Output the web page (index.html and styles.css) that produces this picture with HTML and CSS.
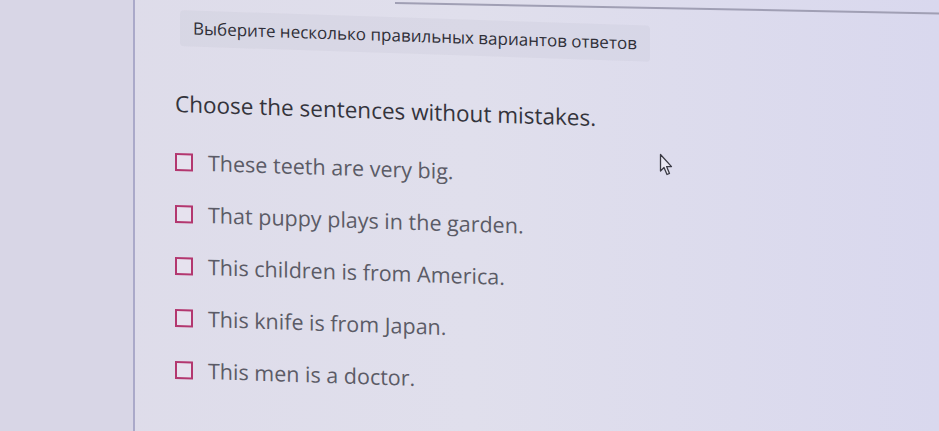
FILE: index.html
```html
<!DOCTYPE html>
<html lang="ru">
<head>
<meta charset="utf-8">
<title>Тест</title>
<link rel="stylesheet" href="styles.css">
</head>
<body>
<div class="screen">
  <div class="side"></div>
  <div class="main">
    <div class="topline"></div>
    <div class="content">
      <div class="hint">Выберите несколько правильных вариантов ответов</div>
      <h2 class="question">Choose the sentences without mistakes.</h2>
      <ul class="options">
        <li class="option"><span class="box"></span><span class="label">These teeth are very big.</span></li>
        <li class="option"><span class="box"></span><span class="label">That puppy plays in the garden.</span></li>
        <li class="option"><span class="box"></span><span class="label">This children is from America.</span></li>
        <li class="option"><span class="box"></span><span class="label">This knife is from Japan.</span></li>
        <li class="option"><span class="box"></span><span class="label">This men is a doctor.</span></li>
      </ul>
    </div>
  </div>
  <svg class="cursor" width="14" height="24" viewBox="0 0 14 24">
    <path d="M1.5 1.5 L1.5 18 L5 14.5 L8 21.5 L10.5 20.4 L7.6 13.6 L12.5 13.6 Z" fill="#e9e8f2" stroke="#3a3a44" stroke-width="1.3" stroke-linejoin="round"/>
  </svg>
</div>
</body>
</html>
```
FILE: styles.css
```css
html, body {
  margin: 0;
  padding: 0;
}
body {
  background: #dcdbea;
  font-family: "Open Sans", "Noto Sans", "DejaVu Sans", sans-serif;
  overflow: hidden;
}
.screen {
  position: relative;
  display: flex;
  width: 939px;
  height: 431px;
  background: linear-gradient(90deg, #dddbe9 0%, #e0dfec 50%, #d9d8ee 100%);
}
.side {
  width: 133px;
  flex: none;
  background: #d8d6e6;
  border-right: 2px solid #aaa9c9;
}
.main {
  flex: 1;
  padding-left: 40px;
}
.topline {
  margin: 2px 0 0 220px;
  height: 2px;
  background: #a09fb4;
  transform: skewY(1.1deg);
  transform-origin: 0 0;
}
.content {
  transform: skewY(1.9deg);
  transform-origin: 0 0;
}
.hint {
  display: inline-block;
  margin: 6px 0 0 5px;
  padding: 6px 13px;
  font-size: 17px;
  line-height: 24px;
  color: #2f2f38;
  background: rgba(120, 118, 140, 0.06);
  border-radius: 4px;
}
.question {
  margin: 43px 0 0 0;
  font-size: 22.5px;
  line-height: 30px;
  font-weight: 400;
  color: #34343c;
}
.options {
  list-style: none;
  margin: 29px 0 0 0;
  padding: 0;
  display: flex;
  flex-direction: column;
  gap: 24px;
}
.option {
  display: flex;
  align-items: center;
  gap: 15px;
  height: 28px;
}
.box {
  width: 14px;
  height: 14px;
  flex: none;
  border: 2px solid #b3376f;
  background: #e6e2ee;
}
.label {
  font-size: 21.5px;
  line-height: 28px;
  color: #5b5b66;
}
.cursor {
  position: absolute;
  left: 659px;
  top: 153px;
}
```
